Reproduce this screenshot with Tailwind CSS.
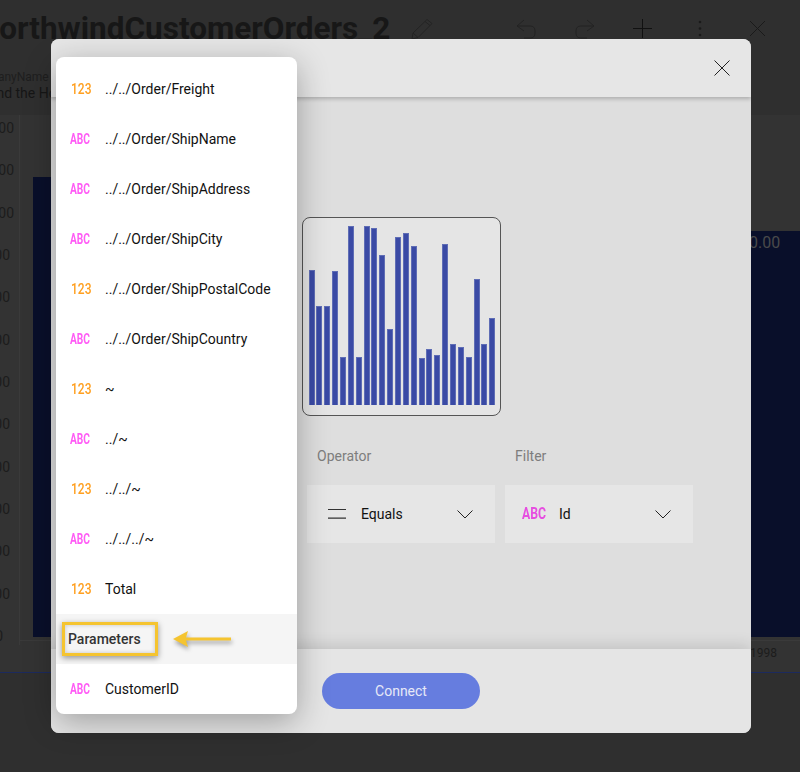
<!DOCTYPE html>
<html>
<head>
<meta charset="utf-8">
<script src="https://cdn.jsdelivr.net/npm/@tailwindcss/browser@4"></script>
</head>
<body class="m-0">
<div class="relative w-[800px] h-[772px] overflow-hidden bg-[#2f2f2f] font-['Roboto',sans-serif]">

  <!-- dimmed page behind the dialog -->
  <div class="flex flex-col h-full">
    <header class="h-[115px] shrink-0 relative">
      <div class="flex items-start h-[58px] pt-[10px]">
        <h1 class="ml-[-23px] shrink-0 w-[434px] text-[31.5px] leading-[38px] font-bold text-[#171717] whitespace-nowrap">NorthwindCustomerOrders_2</h1>
        <svg class="shrink-0 mt-[8px]" width="22" height="22" viewBox="0 0 22 22" fill="none" stroke="#232323" stroke-width="1"><path d="M1 21 L2 15 L16 1.5 L21 5.5 L7 19.5 Z M2 15 L7 19.5 M14 3.5 L19 7.5"/></svg>
        <svg class="shrink-0 ml-[83px] mt-[9px]" width="21" height="20" viewBox="0 0 21 20" fill="none" stroke="#232323" stroke-width="1"><path d="M8 1 L1 7 L8 12 M1 7 H14 Q19 7 19 12 V14 Q19 19 14 19 H8"/></svg>
        <svg class="shrink-0 ml-[37px] mt-[9px]" width="21" height="20" viewBox="0 0 21 20" fill="none" stroke="#232323" stroke-width="1"><path d="M13 1 L20 7 L13 12 M20 7 H7 Q2 7 2 12 V14 Q2 19 7 19 H13"/></svg>
        <svg class="shrink-0 ml-[37px] mt-[8px]" width="21" height="21" viewBox="0 0 21 21" fill="none" stroke="#111" stroke-width="1"><path d="M10.5 1 V20 M1 10.5 H20"/></svg>
        <svg class="shrink-0 ml-[45px] mt-[10px]" width="4" height="18" viewBox="0 0 4 18" fill="#1a1a1a"><circle cx="2" cy="2" r="1.3"/><circle cx="2" cy="8.5" r="1.3"/><circle cx="2" cy="15" r="1.3"/></svg>
        <svg class="shrink-0 ml-[47px] mt-[10px]" width="17" height="17" viewBox="0 0 17 17" fill="none" stroke="#1a1a1a" stroke-width="1"><path d="M1 1 L16 16 M16 1 L1 16"/></svg>
      </div>
      <p class="ml-[-34px] mt-[11px] text-[12px] leading-[16px] text-[#1e1e1e] whitespace-nowrap">CompanyName</p>
      <p class="ml-[-33px] text-[14px] leading-[17px] text-[#161616] whitespace-nowrap">Around the Horn</p>
    </header>

    <main class="h-[558px] shrink-0 bg-[#333333] border-b border-[#1c2a5e] relative">
      <div class="flex h-[530px]">
        <div class="w-[20px] shrink-0 border-r border-[#3a3a3a] flex flex-col justify-between pt-[5px] pb-[1px] text-[14px] leading-[16px] text-[#1c1c1c] whitespace-nowrap">
          <span class="self-end mr-[5px]">1.00</span><span class="self-end mr-[5px]">1.00</span><span class="self-end mr-[5px]">1.00</span><span class="self-end mr-[9px]">0.00</span><span class="self-end mr-[9px]">0.00</span><span class="self-end mr-[9px]">0.00</span><span class="self-end mr-[9px]">0.00</span><span class="self-end mr-[9px]">0.00</span><span class="self-end mr-[9px]">0.00</span><span class="self-end mr-[9px]">0.00</span><span class="self-end mr-[9px]">0.00</span><span class="self-end mr-[9px]">0.00</span><span class="self-end mr-[16px]">0</span>
        </div>
        <div class="flex-1 flex items-end border-b border-[#3a3a3a] mb-[4px] pb-[3px] pl-[13px]">
          <div class="w-[30px] h-[460px] bg-[#090f2a]"></div>
          <div class="flex-1"></div>
          <div class="w-[49px] h-[406px] bg-[#090f2a] text-[16px] leading-[24px] text-[#4a4a4a] whitespace-nowrap"><span class="block ml-[-22px] pl-[20px]">0.00</span></div>
        </div>
      </div>
      <div class="flex justify-end pr-[23px] text-[12px] leading-[16px] text-[#1c1c1c]">1998</div>
    </main>
  </div>

  <!-- connection dialog -->
  <section class="absolute isolate left-[51px] top-[39px] w-[700px] h-[694px] rounded-[8px] overflow-hidden bg-[#dedede] flex flex-col">
    <div class="h-[58px] shrink-0 bg-[#e6e6e6] shadow-[0_2px_4px_rgba(0,0,0,0.22)] relative z-10 flex items-center justify-end pr-[21px]">
      <svg width="16" height="16" viewBox="0 0 16 16" fill="none" stroke="#222" stroke-width="1"><path d="M0.5 0.5 L15.5 15.5 M15.5 0.5 L0.5 15.5"/></svg>
    </div>

    <div class="flex-1 flex flex-col pl-[256px]">
      <div class="ml-[-5.5px] mt-[120px] w-[199px] h-[199px] rounded-[8px] border border-[#555] bg-[#e5e5e5] flex items-end gap-[1.87px] px-[6px] pb-[10px]">
        <i class="block w-[6px] shrink-0 bg-[#3a4aa5] border border-[#5f6db5] border-b-0 h-[135px]"></i>
        <i class="block w-[6px] shrink-0 bg-[#3a4aa5] border border-[#5f6db5] border-b-0 h-[99px]"></i>
        <i class="block w-[6px] shrink-0 bg-[#3a4aa5] border border-[#5f6db5] border-b-0 h-[99px]"></i>
        <i class="block w-[6px] shrink-0 bg-[#3a4aa5] border border-[#5f6db5] border-b-0 h-[134px]"></i>
        <i class="block w-[6px] shrink-0 bg-[#3a4aa5] border border-[#5f6db5] border-b-0 h-[48px]"></i>
        <i class="block w-[6px] shrink-0 bg-[#3a4aa5] border border-[#5f6db5] border-b-0 h-[179px]"></i>
        <i class="block w-[6px] shrink-0 bg-[#3a4aa5] border border-[#5f6db5] border-b-0 h-[48px]"></i>
        <i class="block w-[6px] shrink-0 bg-[#3a4aa5] border border-[#5f6db5] border-b-0 h-[179px]"></i>
        <i class="block w-[6px] shrink-0 bg-[#3a4aa5] border border-[#5f6db5] border-b-0 h-[177px]"></i>
        <i class="block w-[6px] shrink-0 bg-[#3a4aa5] border border-[#5f6db5] border-b-0 h-[150px]"></i>
        <i class="block w-[6px] shrink-0 bg-[#3a4aa5] border border-[#5f6db5] border-b-0 h-[76px]"></i>
        <i class="block w-[6px] shrink-0 bg-[#3a4aa5] border border-[#5f6db5] border-b-0 h-[168px]"></i>
        <i class="block w-[6px] shrink-0 bg-[#3a4aa5] border border-[#5f6db5] border-b-0 h-[172px]"></i>
        <i class="block w-[6px] shrink-0 bg-[#3a4aa5] border border-[#5f6db5] border-b-0 h-[159px]"></i>
        <i class="block w-[6px] shrink-0 bg-[#3a4aa5] border border-[#5f6db5] border-b-0 h-[47px]"></i>
        <i class="block w-[6px] shrink-0 bg-[#3a4aa5] border border-[#5f6db5] border-b-0 h-[56px]"></i>
        <i class="block w-[6px] shrink-0 bg-[#3a4aa5] border border-[#5f6db5] border-b-0 h-[50px]"></i>
        <i class="block w-[6px] shrink-0 bg-[#3a4aa5] border border-[#5f6db5] border-b-0 h-[161px]"></i>
        <i class="block w-[6px] shrink-0 bg-[#3a4aa5] border border-[#5f6db5] border-b-0 h-[61px]"></i>
        <i class="block w-[6px] shrink-0 bg-[#3a4aa5] border border-[#5f6db5] border-b-0 h-[58px]"></i>
        <i class="block w-[6px] shrink-0 bg-[#3a4aa5] border border-[#5f6db5] border-b-0 h-[48px]"></i>
        <i class="block w-[6px] shrink-0 bg-[#3a4aa5] border border-[#5f6db5] border-b-0 h-[126px]"></i>
        <i class="block w-[6px] shrink-0 bg-[#3a4aa5] border border-[#5f6db5] border-b-0 h-[61px]"></i>
        <i class="block w-[6px] shrink-0 bg-[#3a4aa5] border border-[#5f6db5] border-b-0 h-[87px]"></i>
      </div>

      <div class="flex gap-[10px] mt-[30px]">
        <div class="w-[188px]">
          <p class="pl-[10px] text-[14px] leading-[20px] text-[#7d7d7d]">Operator</p>
          <div class="mt-[19px] h-[58px] bg-[#e6e6e6] flex items-center pl-[21px] pr-[22px]">
            <svg width="18" height="12" viewBox="0 0 18 12" fill="none" stroke="#333" stroke-width="1.2"><path d="M0 1.5 H18 M0 10.2 H18"/></svg>
            <span class="ml-[15px] text-[14px] text-[#111]">Equals</span>
            <svg class="ml-auto" width="16" height="9" viewBox="0 0 16 9" fill="none" stroke="#222" stroke-width="1"><path d="M0.5 0.5 L8 8 L15.5 0.5"/></svg>
          </div>
        </div>
        <div class="w-[188px]">
          <p class="pl-[10px] text-[14px] leading-[20px] text-[#7d7d7d]">Filter</p>
          <div class="mt-[19px] h-[58px] bg-[#e6e6e6] flex items-center pl-[17px] pr-[22px]">
            <span class="w-[25px] shrink-0 origin-left scale-x-[.72] text-[17px] font-bold text-[#e64ee0] whitespace-nowrap">ABC</span>
            <span class="ml-[12px] text-[14px] text-[#111]">Id</span>
            <svg class="ml-auto" width="16" height="9" viewBox="0 0 16 9" fill="none" stroke="#222" stroke-width="1"><path d="M0.5 0.5 L8 8 L15.5 0.5"/></svg>
          </div>
        </div>
      </div>
    </div>

    <div class="h-[84px] shrink-0 bg-[#e5e5e5] shadow-[0_-4px_14px_rgba(0,0,0,0.12)] flex items-center pl-[271px]">
      <button class="w-[158px] h-[36px] rounded-full bg-[#667ddf] text-[14px] text-[#e6e9f7]">Connect</button>
    </div>
  </section>

  <!-- field dropdown -->
  <ul class="absolute left-[56px] top-[57px] w-[241px] h-[657px] rounded-[8px] bg-white pt-[7px] shadow-[0_8px_32px_rgba(0,0,0,0.3)] text-[14px] text-[#111]">
    <li class="h-[50px] flex items-center pl-[15px]"><span class="w-[34px] shrink-0 origin-left scale-x-[.8] text-[15px] font-medium text-[#ff9f1f]">123</span>../../Order/Freight</li>
    <li class="h-[50px] flex items-center pl-[14px]"><span class="w-[35px] shrink-0 origin-left scale-x-[.68] text-[15px] font-bold text-[#ff5cf5]">ABC</span>../../Order/ShipName</li>
    <li class="h-[50px] flex items-center pl-[14px]"><span class="w-[35px] shrink-0 origin-left scale-x-[.68] text-[15px] font-bold text-[#ff5cf5]">ABC</span>../../Order/ShipAddress</li>
    <li class="h-[50px] flex items-center pl-[14px]"><span class="w-[35px] shrink-0 origin-left scale-x-[.68] text-[15px] font-bold text-[#ff5cf5]">ABC</span>../../Order/ShipCity</li>
    <li class="h-[50px] flex items-center pl-[15px]"><span class="w-[34px] shrink-0 origin-left scale-x-[.8] text-[15px] font-medium text-[#ff9f1f]">123</span>../../Order/ShipPostalCode</li>
    <li class="h-[50px] flex items-center pl-[14px]"><span class="w-[35px] shrink-0 origin-left scale-x-[.68] text-[15px] font-bold text-[#ff5cf5]">ABC</span>../../Order/ShipCountry</li>
    <li class="h-[50px] flex items-center pl-[15px]"><span class="w-[34px] shrink-0 origin-left scale-x-[.8] text-[15px] font-medium text-[#ff9f1f]">123</span>~</li>
    <li class="h-[50px] flex items-center pl-[14px]"><span class="w-[35px] shrink-0 origin-left scale-x-[.68] text-[15px] font-bold text-[#ff5cf5]">ABC</span>../~</li>
    <li class="h-[50px] flex items-center pl-[15px]"><span class="w-[34px] shrink-0 origin-left scale-x-[.8] text-[15px] font-medium text-[#ff9f1f]">123</span>../../~</li>
    <li class="h-[50px] flex items-center pl-[14px]"><span class="w-[35px] shrink-0 origin-left scale-x-[.68] text-[15px] font-bold text-[#ff5cf5]">ABC</span>../../../~</li>
    <li class="h-[50px] flex items-center pl-[15px]"><span class="w-[34px] shrink-0 origin-left scale-x-[.8] text-[15px] font-medium text-[#ff9f1f]">123</span>Total</li>
    <li class="h-[50px] flex items-center bg-[#f5f5f5] pl-[6px]">
      <span class="w-[96px] h-[34px] border-[3px] border-[#f5c430] shadow-[0_2px_6px_rgba(0,0,0,0.4),inset_0_0_4px_rgba(0,0,0,0.2)] flex items-center pl-[3px] font-medium text-[#333]">Parameters</span>
      <svg class="ml-[13px] mt-[2px] drop-shadow-[1px_3px_2px_rgba(0,0,0,0.35)]" width="62" height="20" viewBox="0 0 62 20" fill="#f5c430"><path d="M2 9 L17 1 L15 7.5 H60 V10.5 H15 L17 17 Z"/></svg>
    </li>
    <li class="h-[50px] flex items-center pl-[14px]"><span class="w-[35px] shrink-0 origin-left scale-x-[.68] text-[15px] font-bold text-[#ff5cf5]">ABC</span>CustomerID</li>
  </ul>
</div>
</body>
</html>
